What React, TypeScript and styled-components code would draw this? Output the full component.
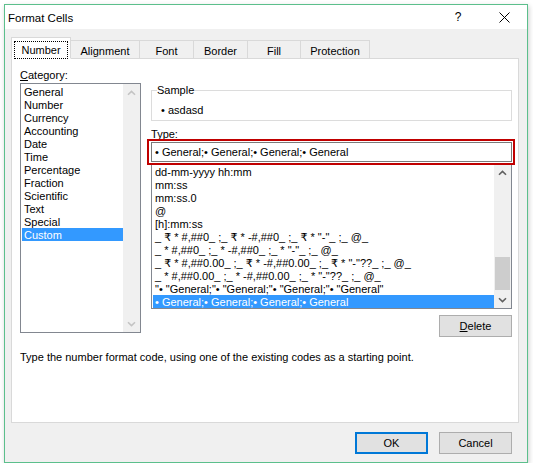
import React from 'react'
import styled, { createGlobalStyle } from 'styled-components'

const categories = [
    'General', 'Number', 'Currency', 'Accounting', 'Date', 'Time',
    'Percentage', 'Fraction', 'Scientific', 'Text', 'Special', 'Custom',
]

const formats = [
    'dd-mm-yyyy hh:mm',
    'mm:ss',
    'mm:ss.0',
    '@',
    '[h]:mm:ss',
    '_ ₹ * #,##0_ ;_ ₹ * -#,##0_ ;_ ₹ * "-"_ ;_ @_',
    '_ * #,##0_ ;_ * -#,##0_ ;_ * "-"_ ;_ @_',
    '_ ₹ * #,##0.00_ ;_ ₹ * -#,##0.00_ ;_ ₹ * "-"??_ ;_ @_',
    '_ * #,##0.00_ ;_ * -#,##0.00_ ;_ * "-"??_ ;_ @_',
    '"• "General;"• "General;"• "General;"• "General"',
    '• General;• General;• General;• General',
]

const tabs = [
    { label: 'Number', width: 60 },
    { label: 'Alignment', width: 69 },
    { label: 'Font', width: 54 },
    { label: 'Border', width: 54 },
    { label: 'Fill', width: 53 },
    { label: 'Protection', width: 69 },
]

type ChevronProps = {
    down?: boolean
    disabled?: boolean
}

//scroll arrow glyph
const Chevron = ({ down, disabled }: ChevronProps) => (
    <svg width="9" height="6" viewBox="0 0 9 6">
        <polyline
            points={down ? '1,1.2 4.5,4.6 8,1.2' : '1,4.8 4.5,1.4 8,4.8'}
            fill="none"
            stroke={disabled ? '#c4c4c4' : '#606060'}
            strokeWidth="1.6"
        />
    </svg>
)

type ScrollProps = {
    disabled?: boolean
    thumbTop?: number
    thumbHeight?: number
}

const ScrollBar = ({ disabled, thumbTop, thumbHeight }: ScrollProps) => (
    <Scroll>
        <ScrollArrow><Chevron disabled={disabled} /></ScrollArrow>
        <ScrollTrack>
            {!disabled && <Thumb style={{ top: thumbTop, height: thumbHeight }} />}
        </ScrollTrack>
        <ScrollArrow><Chevron down disabled={disabled} /></ScrollArrow>
    </Scroll>
)

const App = () => (
    <Page>
        <GlobalStyle />
        <Window>
            <TitleBar>
                <Title>Format Cells</Title>
                <TitleButton>?</TitleButton>
                <TitleButton>
                    <svg width="11" height="11" viewBox="0 0 11 11">
                        <path d="M0.5 0.5 L10.5 10.5 M10.5 0.5 L0.5 10.5" stroke="#000" strokeWidth="1" />
                    </svg>
                </TitleButton>
            </TitleBar>
            <Body>
                <TabRow>
                    {tabs.map((tab, index) => (
                        <Tab key={tab.label} $active={index === 0} $width={tab.width}>
                            {index === 0 ? <Focus>{tab.label}</Focus> : tab.label}
                        </Tab>
                    ))}
                </TabRow>
                <Panel>
                    <Columns>
                        <Label><u>C</u>ategory:</Label>
                        <span />
                        <ListBox $height={250}>
                            <Items>
                                {categories.map(name => (
                                    <Item key={name} $selected={name === 'Custom'}>{name}</Item>
                                ))}
                            </Items>
                            <ScrollBar disabled />
                        </ListBox>
                        <RightColumn>
                            <Group>
                                <Legend>Sample</Legend>
                                <SampleValue>• asdasd</SampleValue>
                            </Group>
                            <TypeLabel><u>T</u>ype:</TypeLabel>
                            <TypeField>
                                <TypeInput>• General;• General;• General;• General</TypeInput>
                                <Highlight />
                            </TypeField>
                            <ListBox $height={146}>
                                <Items>
                                    {formats.map((code, index) => (
                                        <Item key={code} $selected={index === formats.length - 1}>{code}</Item>
                                    ))}
                                </Items>
                                <ScrollBar thumbTop={76} thumbHeight={33} />
                            </ListBox>
                            <DeleteRow>
                                <Button><u>D</u>elete</Button>
                            </DeleteRow>
                        </RightColumn>
                    </Columns>
                    <Hint>Type the number format code, using one of the existing codes as a starting point.</Hint>
                </Panel>
                <Footer>
                    <Button $default>OK</Button>
                    <Button>Cancel</Button>
                </Footer>
            </Body>
        </Window>
    </Page>
)

/* Style */
const GlobalStyle = createGlobalStyle`
    html, body {
        margin: 0;
        padding: 0;
        background: #fff;
    }
    body {
        font-family: "Liberation Sans", Arial, "DejaVu Sans", sans-serif;
        font-size: 11px;
        color: #000;
    }
    * {
        box-sizing: border-box;
    }
`
const Page = styled.div`
    padding: 4px 0 0 4px;
`
const Window = styled.div`
    width: 524px;
    height: 459px;
    border: 1px solid #5cbf8c;
    background: #f0f0f0;
    box-shadow: 1px 2px 5px rgba(0, 0, 0, .2);
    display: flex;
    flex-direction: column;
`
const TitleBar = styled.div`
    height: 24px;
    background: #fff;
    display: flex;
    align-items: center;
    padding-left: 3px;
`
const Title = styled.div`
    flex: 1;
    font-size: 11.5px;
    line-height: 16px;
    margin-top: 1px;
`
const TitleButton = styled.div`
    width: 46px;
    height: 24px;
    display: flex;
    align-items: center;
    justify-content: center;
    font-size: 12px;
    &:last-child svg {
        margin-top: 1px;
    }
`
const Body = styled.div`
    flex: 1;
    display: flex;
    flex-direction: column;
    padding: 8px 8px 0 6px;
`
const TabRow = styled.div`
    display: flex;
    align-items: flex-end;
    height: 22px;
    margin-bottom: -1px;
    position: relative;
    z-index: 1;
`
const Tab = styled.div<{ $active?: boolean; $width: number }>`
    width: ${p => p.$width}px;
    height: ${p => (p.$active ? 22 : 19)}px;
    display: flex;
    align-items: center;
    justify-content: center;
    padding-top: ${p => (p.$active ? 3 : 2)}px;
    background: ${p => (p.$active ? '#fff' : '#f0f0f0')};
    border: 1px solid #d9d9d9;
    border-left-width: ${p => (p.$active ? 1 : 0)}px;
    border-bottom-color: ${p => (p.$active ? '#fff' : '#d9d9d9')};
    line-height: 14px;
`
const Focus = styled.span`
    display: inline-block;
    outline: 1px dotted #000;
    outline-offset: 0;
    padding: 0 6px;
    line-height: 16px;
`
const Panel = styled.div`
    width: 508px;
    height: 365px;
    background: #fff;
    border: 1px solid #d9d9d9;
    padding: 7px 6px 0 8px;
`
const Columns = styled.div`
    display: grid;
    grid-template-columns: 121px 361px;
    column-gap: 10px;
`
const Label = styled.div`
    height: 17px;
    padding-top: 1px;
    line-height: 16px;
`
const ListBox = styled.div<{ $height: number }>`
    height: ${p => p.$height}px;
    border: 1px solid #828790;
    background: #fff;
    display: flex;
    overflow: hidden;
`
const Items = styled.div`
    flex: 1;
    padding-top: 1px;
    min-width: 0;
`
const Item = styled.div<{ $selected?: boolean }>`
    height: 13px;
    line-height: 15px;
    margin-left: 1px;
    padding-left: 2px;
    white-space: nowrap;
    background: ${p => (p.$selected ? '#3399ff' : 'transparent')};
    color: ${p => (p.$selected ? '#fff' : '#000')};
`
const Scroll = styled.div`
    width: 17px;
    display: flex;
    flex-direction: column;
    background: #f0f0f0;
    position: relative;
`
const ScrollArrow = styled.div`
    height: 17px;
    display: flex;
    align-items: center;
    justify-content: center;
`
const ScrollTrack = styled.div`
    flex: 1;
    position: relative;
`
const Thumb = styled.div`
    position: absolute;
    left: 1px;
    right: 1px;
    background: #cdcdcd;
`
const RightColumn = styled.div`
    display: flex;
    flex-direction: column;
`
const Group = styled.fieldset`
    margin: 0;
    padding: 0 5px;
    border: 1px solid #dcdcdc;
    min-width: 0;
`
const Legend = styled.legend`
    padding: 0;
    line-height: 14px;
`
const SampleValue = styled.div`
    line-height: 15px;
    padding: 6px 0 2px 4px;
`
const TypeLabel = styled.div`
    margin-top: 5px;
    height: 16px;
    padding-top: 1px;
    line-height: 15px;
`
const TypeField = styled.div`
    position: relative;
    height: 21px;
`
const TypeInput = styled.div`
    height: 20px;
    border: 1px solid #7a7a7a;
    padding-left: 3px;
    line-height: 18px;
    background: #fff;
`
const Highlight = styled.div`
    position: absolute;
    left: -4px;
    right: -3px;
    top: -3px;
    bottom: -2px;
    border: 2px solid #c00000;
    pointer-events: none;
    z-index: 1;
`
const DeleteRow = styled.div`
    display: flex;
    justify-content: flex-end;
    margin-top: 6px;
`
const Button = styled.div<{ $default?: boolean }>`
    width: 73px;
    height: 22px;
    display: flex;
    align-items: center;
    justify-content: center;
    padding-top: 1px;
    background: #e1e1e1;
    border: ${p => (p.$default ? '2px solid #0078d7' : '1px solid #adadad')};
    line-height: 15px;
`
const Hint = styled.div`
    margin-top: 13px;
    line-height: 15px;
`
const Footer = styled.div`
    display: flex;
    justify-content: flex-end;
    gap: 11px;
    padding: 9px 7px 0 0;
`

export default App
